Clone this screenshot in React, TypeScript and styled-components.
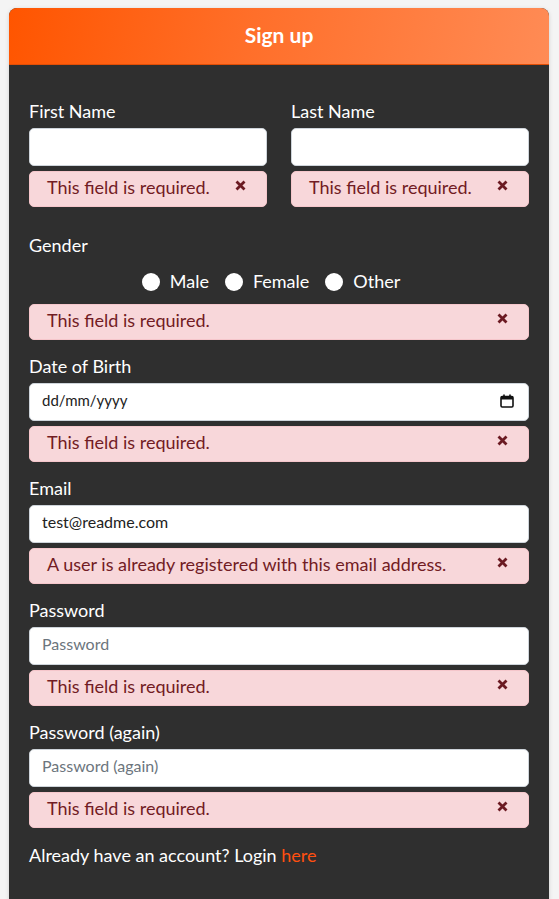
import styled, { createGlobalStyle } from "styled-components";

const GlobalStyle = createGlobalStyle`
  html, body {
    margin: 0;
    background: #f4f4f4;
  }
  body {
    padding: 8px 10px 0 9px;
    font-family: Lato, "Open Sans", sans-serif;
  }
  * {
    box-sizing: border-box;
  }
`;

const Card = styled.div`
  background: #2f2f2f;
  border-radius: 8px;
  overflow: hidden;
  box-shadow: 0 1px 4px rgba(0, 0, 0, 0.15);
`;

const Header = styled.div`
  height: 57px;
  padding-bottom: 3px;
  background: linear-gradient(100deg, #ff5500 0%, #ff6f2a 45%, #ff8b55 100%);
  border-bottom: 1px solid #e24e06;
  display: flex;
  align-items: center;
  justify-content: center;
  color: #fff;
  font-size: 21px;
  font-weight: 700;
`;

const Form = styled.form`
  padding: 35px 20px 40px;
  display: flex;
  flex-direction: column;
  gap: 15px;
`;

const Row = styled.div`
  display: grid;
  grid-template-columns: 1fr 1fr;
  gap: 24px;
  margin-bottom: 12px;
`;

const Group = styled.div`
  display: flex;
  flex-direction: column;
`;

const Label = styled.label`
  color: #fff;
  font-size: 18px;
  line-height: 24px;
  margin-bottom: 4px;
  position: relative;
  top: -1px;
`;

const Input = styled.input<{ $dateLike?: boolean }>`
  width: 100%;
  height: 38px;
  border: 1px solid #ced4da;
  border-radius: 5px;
  padding: 0 10px 5px 12px;
  font-family: inherit;
  font-size: ${(p) => (p.$dateLike ? "15px" : "16px")};
  color: #222;
  background: #fff;
  outline: none;

  &::placeholder {
    color: ${(p) => (p.$dateLike ? "#222" : "#6c757d")};
  }
`;

const DateWrap = styled.div`
  position: relative;
`;

const CalendarIcon = styled.svg`
  position: absolute;
  right: 15px;
  top: 11px;
  width: 14px;
  height: 14px;
  pointer-events: none;
`;

const ErrorBox = styled.div`
  margin-top: 5px;
  height: 36px;
  padding: 0 20px 5px 17px;
  display: flex;
  align-items: center;
  justify-content: space-between;
  background: #f8d7da;
  border: 1px solid #f5c6cb;
  border-radius: 5px;
  color: #721c24;
  font-size: 18px;
`;

const Close = styled.svg`
  flex-shrink: 0;
  width: 11px;
  height: 11px;
  margin-bottom: 3px;
`;

const Radios = styled.div`
  display: flex;
  justify-content: center;
  align-items: center;
  gap: 16px;
  margin: 7px 0 6px;
  padding-right: 16px;
  height: 24px;
`;

const RadioOption = styled.label`
  display: flex;
  align-items: center;
  gap: 10px;
  color: #fff;
  font-size: 18px;
`;

const Radio = styled.input`
  appearance: none;
  margin: 0;
  width: 18px;
  height: 18px;
  border-radius: 50%;
  background: #fff;
  margin-top: 2px;
`;

const Footer = styled.p`
  margin: 0;
  color: #fff;
  font-size: 18px;
  line-height: 24px;

  a {
    color: #ff4f0f;
    text-decoration: none;
  }
`;

function FieldError({ text }: { text: string }) {
  return (
    <ErrorBox>
      <span>{text}</span>
      <Close viewBox="0 0 11 11">
        <path
          d="M1.5 1.5 L9.5 9.5 M9.5 1.5 L1.5 9.5"
          stroke="#6b1a22"
          strokeWidth="2.8"
          strokeLinecap="butt"
        />
      </Close>
    </ErrorBox>
  );
}

const REQUIRED = "This field is required.";

export default function App() {
  return (
    <>
      <GlobalStyle />
      <Card>
        <Header>Sign up</Header>
        <Form onSubmit={(e) => e.preventDefault()}>
          <Row>
            <Group>
              <Label>First Name</Label>
              <Input type="text" />
              <FieldError text={REQUIRED} />
            </Group>
            <Group>
              <Label>Last Name</Label>
              <Input type="text" />
              <FieldError text={REQUIRED} />
            </Group>
          </Row>

          <Group>
            <Label>Gender</Label>
            <Radios>
              {["Male", "Female", "Other"].map((g) => (
                <RadioOption key={g}>
                  <Radio type="radio" name="gender" value={g} />
                  {g}
                </RadioOption>
              ))}
            </Radios>
            <FieldError text={REQUIRED} />
          </Group>

          <Group>
            <Label>Date of Birth</Label>
            <DateWrap>
              <Input type="text" placeholder="dd/mm/yyyy" $dateLike />
              <CalendarIcon viewBox="0 0 14 14">
                <rect x="1" y="2.5" width="12" height="10.5" rx="1.2" fill="none" stroke="#111" strokeWidth="1.6" />
                <rect x="1" y="2.5" width="12" height="3" fill="#111" />
                <path d="M4 0.5 V3 M10 0.5 V3" stroke="#111" strokeWidth="1.6" />
              </CalendarIcon>
            </DateWrap>
            <FieldError text={REQUIRED} />
          </Group>

          <Group>
            <Label>Email</Label>
            <Input type="email" defaultValue="test@readme.com" />
            <FieldError text="A user is already registered with this email address." />
          </Group>

          <Group>
            <Label>Password</Label>
            <Input type="password" placeholder="Password" />
            <FieldError text={REQUIRED} />
          </Group>

          <Group>
            <Label>Password (again)</Label>
            <Input type="password" placeholder="Password (again)" />
            <FieldError text={REQUIRED} />
          </Group>

          <Footer>
            Already have an account? Login <a href="#">here</a>
          </Footer>
        </Form>
      </Card>
    </>
  );
}
